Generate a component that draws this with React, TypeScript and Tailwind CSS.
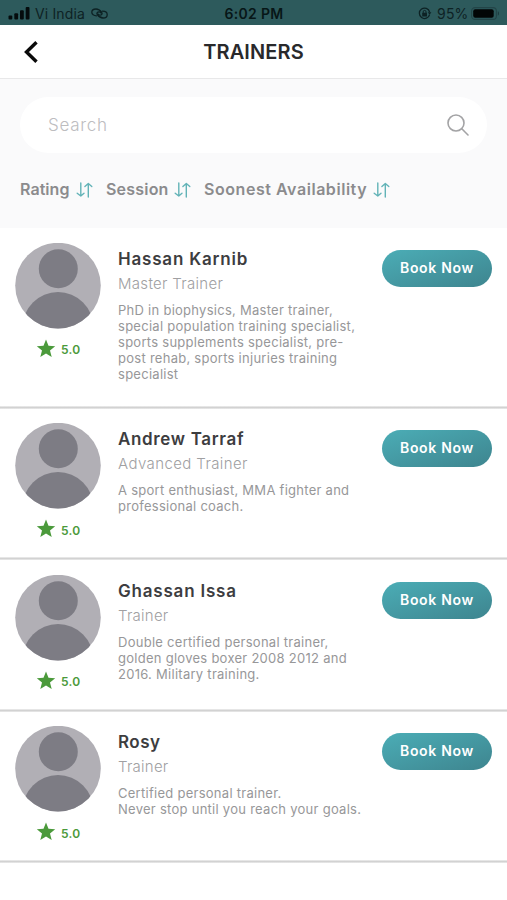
import type { ReactNode } from 'react'

type Trainer = {
  name: string
  nameTracking: string
  level: string
  levelTracking: string
  bio: string[]
  height: string
}

const trainers: Trainer[] = [
  {
    name: 'Hassan Karnib',
    nameTracking: 'tracking-[0.8px]',
    level: 'Master Trainer',
    levelTracking: 'tracking-[0.3px]',
    bio: [
      'PhD in biophysics, Master trainer,',
      'special population training specialist,',
      'sports supplements specialist, pre-',
      'post rehab, sports injuries training',
      'specialist',
    ],
    height: 'h-[180.4px]',
  },
  {
    name: 'Andrew Tarraf',
    nameTracking: 'tracking-[0.65px]',
    level: 'Advanced Trainer',
    levelTracking: 'tracking-[0.4px]',
    bio: ['A sport enthusiast, MMA fighter and', 'professional coach.'],
    height: 'h-[151.6px]',
  },
  {
    name: 'Ghassan Issa',
    nameTracking: 'tracking-[0.8px]',
    level: 'Trainer',
    levelTracking: 'tracking-[0.25px]',
    bio: [
      'Double certified personal trainer,',
      'golden gloves boxer 2008 2012 and',
      '2016. Military training.',
    ],
    height: 'h-[151.4px]',
  },
  {
    name: 'Rosy',
    nameTracking: 'tracking-[0.5px]',
    level: 'Trainer',
    levelTracking: 'tracking-[0.25px]',
    bio: ['Certified personal trainer.', 'Never stop until you reach your goals.'],
    height: 'h-[151.6px]',
  },
]

function StatusBar() {
  return (
    <div className="h-[25px] bg-[#2d5a5c] flex items-center text-[#0d2224] text-[14px] leading-[25px] pt-[2px] whitespace-nowrap">
      <div className="flex-1 flex items-center pl-2">
        <svg width="22" height="13" viewBox="0 0 22 13" fill="#050c0d">
          <rect x="0.5" y="8.5" width="3.8" height="4" rx="1" />
          <rect x="6.3" y="6.3" width="3.8" height="6.2" rx="1" />
          <rect x="12" y="3.3" width="3.8" height="9.2" rx="1" />
          <rect x="17.7" y="0" width="3.8" height="12.5" rx="1" />
        </svg>
        <span className="ml-[5px] w-[51px] tracking-[0.15px]">Vi India</span>
        <svg className="ml-[5px]" width="17" height="11" viewBox="0 0 17 11" fill="none" stroke="#0d2224" strokeWidth="1.3" strokeLinecap="round">
          <path d="M5.500 7.800C2.800 7.800 .8 6.300 .8 4.300C.8 2.300 2.600 1 5 1C7.500 1 9.400 2.600 10.800 4.500C11.600 5.800 10.600 7.200 9 7.200C8 7.200 7.300 6.600 6.800 6" />
          <path d="M11.500 3.200C14.200 3.200 16.200 4.700 16.200 6.700C16.200 8.700 14.400 10 12 10C9.500 10 7.600 8.400 6.200 6.500C5.400 5.200 6.400 3.800 8 3.800C9 3.800 9.700 4.400 10.200 5" />
        </svg>
      </div>
      <span className="font-semibold tracking-[0.3px] text-[#071617]">6:02 PM</span>
      <div className="flex-1 flex items-center justify-end pr-[7px]">
        <svg width="14" height="13" viewBox="0 0 14 13" fill="none" stroke="#0d2224" strokeWidth="1.3">
          <path d="M11.600 7.600A5.200 5.200 0 1 1 11.600 5" />
          <path d="M9.800 5.200h3.600l-1.800 2.600z" fill="#0d2224" stroke="none" />
          <rect x="4.200" y="5.800" width="4.800" height="3.600" rx="0.5" fill="#0d2224" stroke="none" />
          <path d="M5.200 6V4.800a1.400 1.400 0 0 1 2.800 0V6" strokeWidth="1" />
        </svg>
        <span className="ml-[5px] w-[33px] tracking-[0.2px]">95%</span>
        <svg className="ml-[1px]" width="29" height="13" viewBox="0 0 29 13" fill="none">
          <rect x="0.600" y="0.600" width="24.800" height="11.800" rx="3.500" stroke="#234548" strokeWidth="1.100" />
          <rect x="2.200" y="2.200" width="20.500" height="8.600" rx="2" fill="#020606" />
          <path d="M26.800 4.300c1.600.6 1.600 3.800 0 4.400z" fill="#1c3c3f" />
        </svg>
      </div>
    </div>
  )
}

function SortIcon() {
  return (
    <svg className="mt-[2px]" width="17" height="16" viewBox="0 0 17 16" fill="none" stroke="#62b3b7" strokeWidth="1.4" strokeLinecap="round" strokeLinejoin="round">
      <path d="M4.800 1v13M1.200 11.200L4.800 14L8 11.200" />
      <path d="M12.300 15V1.500M8.900 4.500L12.300 1.500L15.800 4.500" />
    </svg>
  )
}

function Filter({ children, className }: { children: ReactNode; className: string }) {
  return (
    <button className="flex items-center">
      <span className={`text-left ${className}`}>{children}</span>
      <SortIcon />
    </button>
  )
}

function Avatar() {
  return (
    <svg width="86" height="86" viewBox="0 0 86 86">
      <defs>
        <clipPath id="avatar">
          <circle cx="43" cy="42.600" r="42.800" />
        </clipPath>
      </defs>
      <g clipPath="url(#avatar)">
        <rect width="86" height="86" fill="#b1afb5" />
        <circle cx="43.300" cy="25.800" r="19.500" fill="#7d7c84" />
        <circle cx="43" cy="84.500" r="35.500" fill="#7d7c84" />
      </g>
    </svg>
  )
}

function TrainerCard({ trainer }: { trainer: Trainer }) {
  return (
    <li className={`${trainer.height} bg-white flex flex-col`}>
      <div className="flex-1 flex pl-[15px] pr-[15px] pt-[14.6px]">
        <div className="w-[86px]">
          <Avatar />
          <div className="flex items-center pl-[21px] mt-[10px] h-[19px]">
            <svg width="20" height="19" viewBox="0 0 20 19" fill="#4b9a3b">
              <path d="M10 .5l2.500 6.200 6.700.5-5.200 4.300 1.700 6.500-5.700-3.600-5.700 3.600L6 11.500.8 7.200l6.700-.5z" />
            </svg>
            <span className="ml-[5px] mt-[4px] text-[12px] font-semibold text-[#4b9a3b] tracking-[0.3px]">5.0</span>
          </div>
        </div>
        <div className="ml-[17px] flex-1 whitespace-nowrap">
          <h2 className={`mt-[4px] text-[17px] leading-6 font-semibold text-[#3d3d3f] ${trainer.nameTracking}`}>
            {trainer.name}
          </h2>
          <p className={`mt-[3px] text-[15px] leading-5 font-light text-[#a0a0a2] ${trainer.levelTracking}`}>
            {trainer.level}
          </p>
          <div className="mt-[8px] text-[13px] leading-4 text-[#979799] tracking-[0.27px]">
            {trainer.bio.map((line) => (
              <p key={line}>{line}</p>
            ))}
          </div>
        </div>
        <button className="mt-[7px] w-[110px] h-[37px] rounded-full bg-linear-to-br from-[#4badb6] to-[#3e858f] text-white text-[14px] font-semibold tracking-[0.7px] pb-[2px] whitespace-nowrap">
          Book Now
        </button>
      </div>
      <div className="h-[3px] bg-linear-to-b from-[#f0f0f0] via-[#d2d2d2] to-[#ececec]" />
    </li>
  )
}

function App() {
  return (
    <div className="w-[507px] h-[900px] bg-white overflow-hidden font-['Inter',sans-serif]">
      <StatusBar />

      {/* Header */}
      <header className="h-[54px] px-[22px] flex items-center border-b border-[#e8e8e9]">
        <svg width="18" height="22" viewBox="0 0 18 22" fill="none" stroke="#0a0a0a" strokeWidth="3.400">
          <path d="M14.500 1.300L4.500 11l10 9.700" />
        </svg>
        <h1 className="flex-1 text-center pr-[18px] text-[20px] font-semibold tracking-[0.1px] text-[#29292b]">TRAINERS</h1>
      </header>

      {/* Search and sorting */}
      <section className="h-[149.2px] bg-[#fafafb] pt-[18px]">
        <div className="mx-5 h-[56px] rounded-full bg-white flex items-center justify-between pl-7 pr-[18px]">
          <span className="pt-[2px] text-[17px] font-light text-[#bdbdbf] tracking-[0.7px]">Search</span>
          <svg width="22" height="22" viewBox="0 0 22 22" fill="none" stroke="#a3a3a5" strokeWidth="1.600" strokeLinecap="round">
            <circle cx="9" cy="9" r="8" />
            <path d="M14.800 14.800L21 21" />
          </svg>
        </div>
        <div className="mt-[24px] pl-5 flex gap-[13px] text-[16px] leading-6 font-semibold text-[#8b8b8d] whitespace-nowrap">
          <Filter className="w-[56px] tracking-[0.05px]">Rating</Filter>
          <Filter className="w-[68px] tracking-[0.2px]">Session</Filter>
          <Filter className="w-[169px] tracking-[0.55px]">Soonest Availability</Filter>
        </div>
      </section>

      <ul>
        {trainers.map((trainer) => (
          <TrainerCard key={trainer.name} trainer={trainer} />
        ))}
      </ul>
    </div>
  )
}

export default App
